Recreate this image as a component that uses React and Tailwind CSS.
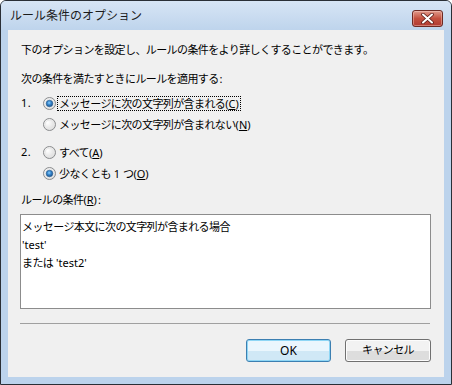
import React from 'react';

const FONT = "font-['Noto_Sans','Noto_Sans_CJK_JP',sans-serif]";

function Radio({ checked }) {
  return (
    <svg width="13" height="13" viewBox="0 0 13 13" className="shrink-0">
      <defs>
        <radialGradient id="rbg" cx="0.35" cy="0.35" r="0.8">
          <stop offset="0" stopColor="#ffffff" />
          <stop offset="1" stopColor="#d4d4d4" />
        </radialGradient>
        <radialGradient id="rdot" cx="0.45" cy="0.4" r="0.6">
          <stop offset="0" stopColor="#8fd2ff" />
          <stop offset="0.45" stopColor="#3a8ad0" />
          <stop offset="1" stopColor="#184f8a" />
        </radialGradient>
      </defs>
      <circle cx="6.5" cy="6.5" r="6" fill="url(#rbg)" stroke="#8a8c8e" />
      <circle cx="6.5" cy="6.5" r="4.4" fill="none" stroke="#e8e8e8" />
      {checked && <circle cx="6.5" cy="6.5" r="3.3" fill="url(#rdot)" stroke="#2a5f92" strokeWidth="0.6" />}
    </svg>
  );
}

// accelerator key, e.g. (C)
function Key({ k }) {
  return (
    <span className="tracking-normal">
      (<u>{k}</u>)
    </span>
  );
}

function OptionRow({ num, checked, focused, children, className }) {
  return (
    <div className={`flex h-[20px] items-center pl-[1px] ${className}`}>
      <span className="w-[22px] tracking-[0.5px]">{num}</span>
      <Radio checked={checked} />
      <span
        className={`ml-[1px] px-[1px] leading-[13px] ${
          focused ? 'border border-dotted border-black' : 'border border-transparent'
        }`}
      >
        {children}
      </span>
    </div>
  );
}

export default function App() {
  return (
    <div className={`${FONT} h-[385px] w-[452px] bg-white text-black`}>
      <div className="flex h-full w-full flex-col overflow-hidden rounded-t-[6px] border border-[#2a2f36] bg-[#bcd3ec]">
        {/* title bar */}
        <div className="flex h-[29px] shrink-0 items-start bg-gradient-to-b from-[#d7e5f5] to-[#bed4ec] pl-[9px] pr-[8px]">
          <span className="mt-[7px] text-[12px] leading-[16px] text-[#1c1c1c]">ルール条件のオプション</span>
          <div className="ml-auto mt-[9px] flex h-[17px] w-[31px] items-center justify-center rounded-[3px] border border-[#6d2a24] bg-gradient-to-b from-[#e09a8c] via-[#c4503f] to-[#b03a32] shadow-[inset_0_0_0_1px_rgba(255,220,210,0.4)]">
            <svg width="13" height="11" viewBox="0 0 13 11">
              <path d="M2 1.5 L11 9.5 M11 1.5 L2 9.5" stroke="#5a1c18" strokeWidth="3.6" strokeLinecap="round" />
              <path d="M2 1.5 L11 9.5 M11 1.5 L2 9.5" stroke="#ffffff" strokeWidth="2" strokeLinecap="round" />
            </svg>
          </div>
        </div>

        {/* client area */}
        <div className="mx-[7px] flex flex-1 flex-col bg-[#f0f0f0] pl-[12px] pr-[13px] pt-[10px] text-[11px] tracking-[-0.6px]">
          <div className="flex h-[20px] items-center pl-[1px]">
            下のオプションを設定し、ルールの条件をより詳しくすることができます。
          </div>
          <div className="mt-[9px] flex h-[20px] items-center pl-[1px]">
            次の条件を満たすときにルールを適用する<span className="ml-[1px] tracking-normal">:</span>
          </div>

          <OptionRow num="1." checked focused className="mt-[4px]">
            メッセージに次の文字列が含まれる<Key k="C" />
          </OptionRow>
          <OptionRow num="" className="mt-[1px]">
            メッセージに次の文字列が含まれない<Key k="N" />
          </OptionRow>
          <OptionRow num="2." className="mt-[8px]">
            すべて<Key k="A" />
          </OptionRow>
          <OptionRow num="" checked className="mt-[1px]">
            少なくとも<span className="tracking-normal"> 1 </span>つ<Key k="O" />
          </OptionRow>

          <div className="mt-[7px] flex h-[20px] items-center pl-[1px]">
            ルールの条件<Key k="R" />
            <span className="ml-[1px] tracking-normal">:</span>
          </div>

          <div className="mt-[4px] h-[95px] border border-[#8c8c8c] bg-white px-[1px] pt-[3px] leading-[18px]">
            <div>メッセージ本文に次の文字列が含まれる場合</div>
            <div className="tracking-normal">'test'</div>
            <div>
              または<span className="tracking-normal"> 'test2'</span>
            </div>
          </div>

          <div className="mt-[14px] mr-[1px] h-px bg-[#a0a0a0]" />

          <div className="mt-[15px] flex justify-end gap-[14px]">
            <button className="flex h-[23px] w-[85px] items-center justify-center rounded-[3px] border border-[#3c7fb1] bg-gradient-to-b from-[#eaf6fd] from-50% to-[#d0e8f6] to-50% text-[12px] tracking-normal shadow-[inset_0_0_0_1px_#8ed6f5]">
              OK
            </button>
            <button className="flex h-[23px] w-[86px] items-center justify-center rounded-[3px] border border-[#707070] bg-gradient-to-b from-[#f2f2f2] from-50% to-[#dddddd] to-50% text-[11px] tracking-[-0.6px] shadow-[inset_0_0_0_1px_#fcfcfc]">
              キャンセル
            </button>
          </div>
        </div>
        <div className="h-[7px] shrink-0" />
      </div>
    </div>
  );
}
